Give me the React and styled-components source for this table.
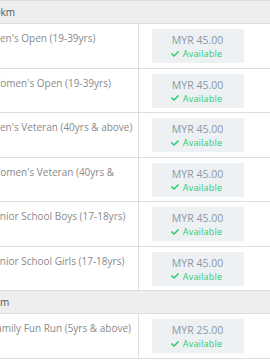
import styled, { createGlobalStyle } from 'styled-components'
import { FaCheck } from 'react-icons/fa'

const Global = createGlobalStyle`
	html, body { margin: 0; padding: 0; background: #fff; }
	body { font-family: "Open Sans", "Liberation Sans", sans-serif; overflow: hidden; }
`

const Table = styled.table`
	margin-left: -17px;
	width: 360px;
	table-layout: fixed;
	border-collapse: collapse;
	border-top: 1px solid #dddddd;
`

const Col = styled.col`
	width: ${(p) => p.$w}px;
`

const HeadRow = styled.tr`
	background: #eeeeee;
	border-bottom: 1px solid #dddddd;
	td {
		height: 22px;
		padding: 0 0 0 6px;
		color: #555555;
		font-size: 10px;
		line-height: 22px;
	}
`

const Row = styled.tr`
	border-bottom: 1px solid #dddddd;
`

const NameCell = styled.td`
	padding: 7px 4px 0 8px;
	vertical-align: top;
	font-size: 10px;
	color: #8a8a8a;
	border-right: 1px solid #dddddd;
`

const NameText = styled.div`
	line-height: 14px;
	max-height: 14px;
	overflow: hidden;
`

const PriceCell = styled.td`
	padding: 5px 0 4.5px 13px;
	vertical-align: top;
`

const PriceBox = styled.div`
	width: 92px;
	height: 34px;
	box-sizing: border-box;
	padding-top: 4px;
	background: #edf1f3;
	text-align: center;
`

const Price = styled.div`
	font-size: 10.5px;
	line-height: 14px;
	color: #8a98a8;
`

const Status = styled.div`
	display: flex;
	align-items: center;
	justify-content: center;
	gap: 4px;
	font-size: 9px;
	line-height: 13px;
	color: #2ecc71;
	letter-spacing: 0.2px;
	svg { margin-left: -2px; }
`

const groups = [
	{
		title: '10km',
		items: [
			{ name: "Men's Open (19-39yrs)", price: '45.00' },
			{ name: "Women's Open (19-39yrs)", price: '45.00' },
			{ name: "Men's Veteran (40yrs & above)", price: '45.00' },
			{ name: "Women's Veteran (40yrs & above)", price: '45.00' },
			{ name: 'Junior School Boys (17-18yrs)', price: '45.00' },
			{ name: 'Junior School Girls (17-18yrs)', price: '45.00' },
		],
	},
	{
		title: '5km',
		items: [
			{ name: 'Family Fun Run (5yrs & above)', price: '25.00' },
		],
	},
]

const App = () => {
	return (
		<>
			<Global />
			<Table>
				<colgroup>
					<Col $w={155} />
					<Col $w={205} />
				</colgroup>
				<tbody>
					{groups.map((g) => (
						<>
							<HeadRow key={g.title}>
								<td colSpan={2}>{g.title}</td>
							</HeadRow>
							{g.items.map((it) => (
								<Row key={it.name}>
									<NameCell>
										<NameText>{it.name}</NameText>
									</NameCell>
									<PriceCell>
										<PriceBox>
											<Price>MYR {it.price}</Price>
											<Status>
												<FaCheck size={8} />
												Available
											</Status>
										</PriceBox>
									</PriceCell>
								</Row>
							))}
						</>
					))}
				</tbody>
			</Table>
		</>
	)
}

export default App
